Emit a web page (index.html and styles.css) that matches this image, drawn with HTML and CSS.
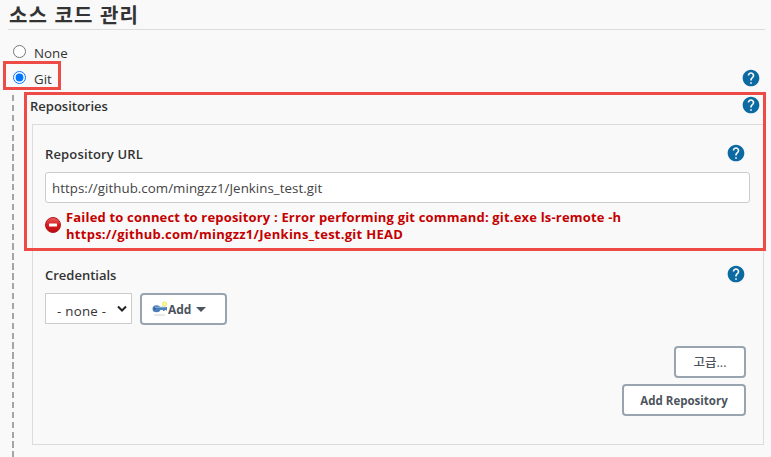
FILE: index.html
```html
<!DOCTYPE html>
<html lang="ko">
<head>
<meta charset="utf-8">
<title>소스 코드 관리</title>
<link rel="stylesheet" href="styles.css">
</head>
<body>
<svg class="defs" width="0" height="0" aria-hidden="true">
  <symbol id="help" viewBox="0 0 24 24"><path fill="#0b6aa2" d="M12 2C6.480 2 2 6.480 2 12s4.480 10 10 10 10-4.480 10-10S17.520 2 12 2zm1 17h-2v-2h2v2zm2.070-7.750-.9.920C13.450 12.900 13 13.500 13 15h-2v-.5c0-1.100.45-2.100 1.170-2.830l1.240-1.260c.37-.36.59-.86.59-1.410 0-1.100-.9-2-2-2s-2 .9-2 2H8c0-2.210 1.790-4 4-4s4 1.790 4 4c0 .88-.36 1.680-.93 2.250z"/></symbol>
</svg>
<main class="section">
  <h1 class="title">소스 코드 관리</h1>
  <label class="option option-none"><input type="radio" name="scm"><span>None</span></label>
  <div class="option option-git"><label><input type="radio" name="scm" checked><span>Git</span></label><svg class="help"><use href="#help"/></svg></div>
  <div class="nested">
    <div class="row repos"><span class="label l-repos">Repositories</span><svg class="help"><use href="#help"/></svg></div>
    <div class="panel">
      <div class="row url-row"><span class="label l-url">Repository URL</span><svg class="help"><use href="#help"/></svg></div>
      <input class="url" type="text" value="https://github.com/mingzz1/Jenkins_test.git">
      <div class="error">
        <svg class="stop" viewBox="0 0 16 16"><defs><linearGradient id="red" x2="0" y2="1"><stop stop-color="#e96060"/><stop offset=".5" stop-color="#d51a1f"/><stop offset="1" stop-color="#b80a10"/></linearGradient></defs><circle cx="8" cy="8" r="7.500" fill="url(#red)" stroke="#b5191d"/><rect x="4" y="6.400" width="8" height="3.200" rx=".5" fill="#fff"/></svg>
        <div><div class="e1">Failed to connect to repository : Error performing git command: git.exe ls-remote -h</div><div class="e2">https://github.com/mingzz1/Jenkins_test.git HEAD</div></div>
      </div>
      <div class="row cred-row"><span class="label l-cred">Credentials</span><svg class="help"><use href="#help"/></svg></div>
      <div class="controls">
        <div class="select"><span>- none -</span><svg width="10" height="8" viewBox="0 0 10 8"><path d="M1 1.500 5 5.500 9 1.500" fill="none" stroke="#222" stroke-width="2"/></svg></div>
        <button class="btn add"><svg width="16" height="16" viewBox="0 0 16 16"><ellipse cx="7.500" cy="14" rx="6" ry="1.300" fill="#e8e8e8"/><path d="M7 6h8v3.500h-1V9h-1.500v1H11V9H7z" fill="#5582b5"/><ellipse cx="4.500" cy="7.800" rx="4" ry="3.500" fill="#4b7fb9"/><path d="M3 6.200h11" stroke="#8bb3dc"/><circle cx="2.700" cy="7.800" r="1" fill="#315a8c"/><circle cx="12.500" cy="3" r="2.500" fill="#f7ee69"/><circle cx="12.500" cy="3" r="1" fill="#fffde0"/></svg><span>Add</span><i class="caret"></i></button>
      </div>
      <div class="actions"><button class="btn advanced">고급...</button><button class="btn add-repo">Add Repository</button></div>
    </div>
  </div>
</main>
<div class="mark mark-git"></div>
<div class="mark mark-repo"></div>
</body>
</html>
```
FILE: styles.css
```css
* { box-sizing: border-box; }
body { margin: 0; width: 771px; height: 457px; overflow: hidden; position: relative; background: #f9f9f9; color: #333; font: 13.3px/20px "Open Sans", "Noto Sans CJK KR", sans-serif; }
.defs { position: absolute; }
.section { padding-left: 8px; }
.title { margin: 0; width: 757px; height: 30px; padding-left: 1px; border-bottom: 1px solid #dcdcdc; font: 700 20px/29px "Noto Sans CJK KR", sans-serif; letter-spacing: 1.05px; white-space: nowrap; }
.option { display: flex; align-items: center; height: 26px; }
.option-none { margin-top: 9px; height: 27px; }
.option-git { justify-content: space-between; height: 23px; margin-bottom: 2px; padding-right: 10px; }
.option label { display: flex; align-items: center; }
.option input { width: 13px; height: 13px; margin: 0 8px 0 5px; position: relative; top: -1px; }
.option-git input { top: 0; }
.option-git span { padding-top: 2px; line-height: 18px; }
.option-none span { padding-top: 1px; }
.help { display: block; width: 20px; height: 20px; flex: none; }
.nested { margin-left: 4px; padding-left: 18px; height: 366px; background: repeating-linear-gradient(to bottom, #a5a5a5 0 6.400px, transparent 6.400px 9.900px) 0 4px / 2px 100% no-repeat; }
.row { display: flex; justify-content: space-between; align-items: center; height: 20px; }
.label { padding-top: 2px; font-weight: 600; font-size: 13px; white-space: nowrap; }
.l-url { letter-spacing: .15px; }
.repos { padding-top: 4px; height: 24px; padding-right: 10px; }
.panel { margin: 9px 0 0 2px; width: 732px; height: 321px; border: 1px solid #dcdcdc; padding: 18px 12px 0; }
.url-row, .cred-row { padding-right: 5px; }
.url { display: block; width: 705px; height: 31px; margin-top: 9px; padding: 0 6px; border: 1px solid #ccc; border-radius: 3px; background: #fff; color: #444; font: inherit; letter-spacing: .05px; }
.error { display: flex; margin-top: 6px; gap: 5px; color: #c40000; font-size: 13px; font-weight: 700; line-height: 17px; white-space: nowrap; }
.e1 { letter-spacing: .18px; }
.e2 { letter-spacing: .27px; }
.stop { width: 16px; height: 16px; margin-top: 8px; flex: none; }
.cred-row { margin-top: 21px; }
.controls { display: flex; margin-top: 9px; gap: 8px; }
.select { display: flex; justify-content: space-between; width: 87px; height: 31px; padding: 7px 4px 0 11px; border: 1px solid #ccc; background: #fff; line-height: 20px; letter-spacing: .25px; }
.select svg { margin-top: 4px; }
.btn { display: flex; align-items: center; justify-content: center; height: 32px; padding: 0; border: 2px solid #98a5b0; border-radius: 4px; background: #fff; color: #4d545d; font: 700 11.5px/20px "Open Sans", "Noto Sans CJK KR", sans-serif; white-space: nowrap; }
.btn span { padding-top: 1px; }
.add { width: 87px; justify-content: flex-start; padding-left: 10px; font-size: 12px; }
.caret { margin-left: 5px; border: 5px solid transparent; border-top-color: #4d545d; border-bottom: 0; }
.actions { display: flex; flex-direction: column; align-items: flex-end; margin: 21px 5px 0 0; gap: 6px; }
.advanced { width: 72px; padding-top: 1px; font-weight: 500; font-size: 12.5px; }
.add-repo { width: 124px; padding-top: 1px; }
.mark { position: absolute; border: 3px solid #ef4b46; }
.mark-git { left: 3px; top: 61px; width: 58px; height: 29px; }
.mark-repo { left: 24px; top: 92px; width: 742px; height: 159px; }
```
